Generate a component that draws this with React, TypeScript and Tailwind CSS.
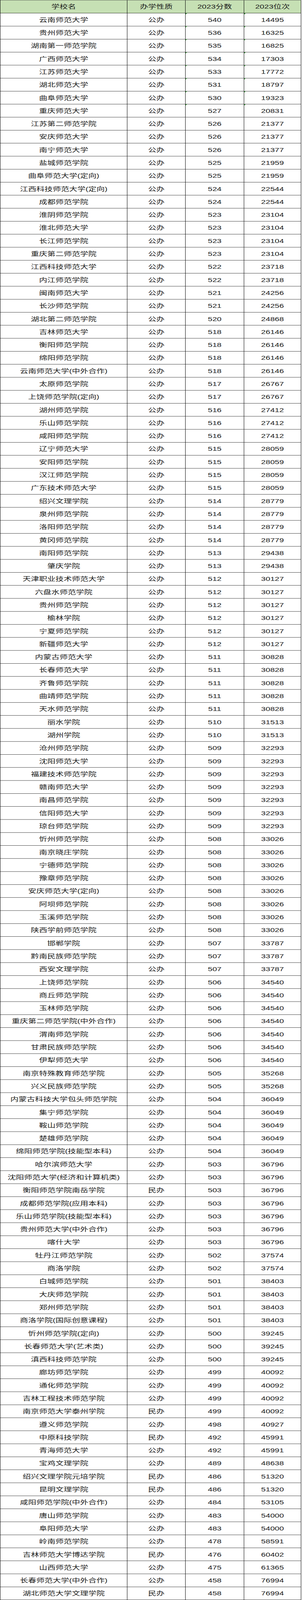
import { useEffect, useState } from "react";

const rows: [string, string, number, number][] = [
  ["云南师范大学", "公办", 540, 14495],
  ["贵州师范大学", "公办", 536, 16325],
  ["湖南第一师范学院", "公办", 535, 16825],
  ["广西师范大学", "公办", 534, 17303],
  ["江苏师范大学", "公办", 533, 17772],
  ["湖北师范大学", "公办", 531, 18797],
  ["曲阜师范大学", "公办", 530, 19323],
  ["重庆师范大学", "公办", 527, 20831],
  ["江苏第二师范学院", "公办", 526, 21377],
  ["安庆师范大学", "公办", 526, 21377],
  ["南宁师范大学", "公办", 526, 21377],
  ["盐城师范学院", "公办", 525, 21959],
  ["曲阜师范大学(定向)", "公办", 525, 21959],
  ["江西科技师范大学(定向)", "公办", 524, 22544],
  ["成都师范学院", "公办", 524, 22544],
  ["淮阴师范学院", "公办", 523, 23104],
  ["淮北师范大学", "公办", 523, 23104],
  ["长江师范学院", "公办", 523, 23104],
  ["重庆第二师范学院", "公办", 523, 23104],
  ["江西科技师范大学", "公办", 522, 23718],
  ["内江师范学院", "公办", 522, 23718],
  ["闽南师范大学", "公办", 521, 24256],
  ["长沙师范学院", "公办", 521, 24256],
  ["湖北第二师范学院", "公办", 520, 24868],
  ["吉林师范大学", "公办", 518, 26146],
  ["衡阳师范学院", "公办", 518, 26146],
  ["绵阳师范学院", "公办", 518, 26146],
  ["云南师范大学(中外合作)", "公办", 518, 26146],
  ["太原师范学院", "公办", 517, 26767],
  ["上饶师范学院(定向)", "公办", 517, 26767],
  ["湖州师范学院", "公办", 516, 27412],
  ["乐山师范学院", "公办", 516, 27412],
  ["咸阳师范学院", "公办", 516, 27412],
  ["辽宁师范大学", "公办", 515, 28059],
  ["安阳师范学院", "公办", 515, 28059],
  ["汉江师范学院", "公办", 515, 28059],
  ["广东技术师范大学", "公办", 515, 28059],
  ["绍兴文理学院", "公办", 514, 28779],
  ["泉州师范学院", "公办", 514, 28779],
  ["洛阳师范学院", "公办", 514, 28779],
  ["黄冈师范学院", "公办", 514, 28779],
  ["南阳师范学院", "公办", 513, 29438],
  ["肇庆学院", "公办", 513, 29438],
  ["天津职业技术师范大学", "公办", 512, 30127],
  ["六盘水师范学院", "公办", 512, 30127],
  ["贵州师范学院", "公办", 512, 30127],
  ["榆林学院", "公办", 512, 30127],
  ["宁夏师范学院", "公办", 512, 30127],
  ["新疆师范大学", "公办", 512, 30127],
  ["内蒙古师范大学", "公办", 511, 30828],
  ["长春师范大学", "公办", 511, 30828],
  ["齐鲁师范学院", "公办", 511, 30828],
  ["曲靖师范学院", "公办", 511, 30828],
  ["天水师范学院", "公办", 511, 30828],
  ["丽水学院", "公办", 510, 31513],
  ["湖州学院", "公办", 510, 31513],
  ["沧州师范学院", "公办", 509, 32293],
  ["沈阳师范大学", "公办", 509, 32293],
  ["福建技术师范学院", "公办", 509, 32293],
  ["赣南师范大学", "公办", 509, 32293],
  ["南昌师范学院", "公办", 509, 32293],
  ["信阳师范大学", "公办", 509, 32293],
  ["琼台师范学院", "公办", 509, 32293],
  ["忻州师范学院", "公办", 508, 33026],
  ["南京晓庄学院", "公办", 508, 33026],
  ["宁德师范学院", "公办", 508, 33026],
  ["豫章师范学院", "公办", 508, 33026],
  ["安庆师范大学(定向)", "公办", 508, 33026],
  ["阿坝师范学院", "公办", 508, 33026],
  ["玉溪师范学院", "公办", 508, 33026],
  ["陕西学前师范学院", "公办", 508, 33026],
  ["邯郸学院", "公办", 507, 33787],
  ["黔南民族师范学院", "公办", 507, 33787],
  ["西安文理学院", "公办", 507, 33787],
  ["上饶师范学院", "公办", 506, 34540],
  ["商丘师范学院", "公办", 506, 34540],
  ["玉林师范学院", "公办", 506, 34540],
  ["重庆第二师范学院(中外合作)", "公办", 506, 34540],
  ["渭南师范学院", "公办", 506, 34540],
  ["甘肃民族师范学院", "公办", 506, 34540],
  ["伊犁师范大学", "公办", 506, 34540],
  ["南京特殊教育师范学院", "公办", 505, 35268],
  ["兴义民族师范学院", "公办", 505, 35268],
  ["内蒙古科技大学包头师范学院", "公办", 504, 36049],
  ["集宁师范学院", "公办", 504, 36049],
  ["鞍山师范学院", "公办", 504, 36049],
  ["楚雄师范学院", "公办", 504, 36049],
  ["绵阳师范学院(技能型本科)", "公办", 504, 36049],
  ["哈尔滨师范大学", "公办", 503, 36796],
  ["沈阳师范大学(经济和计算机类)", "公办", 503, 36796],
  ["衡阳师范学院南岳学院", "民办", 503, 36796],
  ["成都师范学院(应用本科)", "公办", 503, 36796],
  ["乐山师范学院(技能型本科)", "公办", 503, 36796],
  ["贵州师范大学(中外合作)", "公办", 503, 36796],
  ["喀什大学", "公办", 503, 36796],
  ["牡丹江师范学院", "公办", 502, 37574],
  ["商洛学院", "公办", 502, 37574],
  ["白城师范学院", "公办", 501, 38403],
  ["大庆师范学院", "公办", 501, 38403],
  ["郑州师范学院", "公办", 501, 38403],
  ["商洛学院(国际创意课程)", "公办", 501, 38403],
  ["忻州师范学院(定向)", "公办", 500, 39245],
  ["长春师范大学(艺术类)", "公办", 500, 39245],
  ["滇西科技师范学院", "公办", 500, 39245],
  ["廊坊师范学院", "公办", 499, 40092],
  ["通化师范学院", "公办", 499, 40092],
  ["吉林工程技术师范学院", "公办", 499, 40092],
  ["南京师范大学泰州学院", "民办", 499, 40092],
  ["遵义师范学院", "公办", 498, 40927],
  ["中原科技学院", "民办", 492, 45991],
  ["青海师范大学", "公办", 492, 45991],
  ["宝鸡文理学院", "公办", 489, 48638],
  ["绍兴文理学院元培学院", "民办", 486, 51320],
  ["昆明文理学院", "民办", 486, 51320],
  ["咸阳师范学院(中外合作)", "公办", 484, 53105],
  ["唐山师范学院", "公办", 483, 54000],
  ["阜阳师范大学", "公办", 483, 54000],
  ["岭南师范学院", "公办", 478, 58591],
  ["吉林师范大学博达学院", "民办", 476, 60402],
  ["山西师范大学", "公办", 475, 61365],
  ["长春师范大学(中外合作)", "公办", 458, 76994],
  ["湖北师范大学文理学院", "民办", 458, 76994],
];

const FULL_HEIGHT = 5659;

// excel's "number stored as text" marker, only on the first rows
const Marker = () => (
  <span className="absolute left-0 top-0 h-0 w-0 border-t-[4px] border-r-[4px] border-t-[#1e8c1e] border-r-transparent" />
);

const cell = "flex h-[46px] items-center justify-center border-r border-b border-black";

// the sheet is drawn at 46px rows; if the window is shorter than the sheet,
// squeeze it vertically so the whole table still fits in the frame
const useFit = () => {
  const get = () => Math.min(1, window.innerHeight / FULL_HEIGHT);
  const [k, setK] = useState(get);
  useEffect(() => {
    const onResize = () => setK(get());
    window.addEventListener("resize", onResize);
    return () => window.removeEventListener("resize", onResize);
  }, []);
  return k;
};

export default function App() {
  const k = useFit();

  return (
    <div className="h-screen overflow-hidden bg-white">
      <div
        className="w-[771px] origin-top-left bg-white text-[21px] leading-none text-[#1a1a1a]"
        style={{
          fontFamily: '"Liberation Sans", "Noto Sans CJK SC", sans-serif',
          transform: `scaleY(${k})`,
        }}
      >
        <div className="grid grid-cols-[325px_149px_150px_146px] border-t border-l border-black">
          <div className={`${cell} bg-[#c6e0b4]`}>学校名</div>
          <div className={`${cell} bg-[#c6e0b4]`}>办学性质</div>
          <div className={`${cell} bg-[#c6e0b4]`}>2023分数</div>
          <div className={`${cell} bg-[#c6e0b4]`}>2023位次</div>
          {rows.map(([name, kind, score, rank], i) => (
            <div key={i} className="contents">
              <div className={cell}>{name}</div>
              <div className={cell}>{kind}</div>
              <div className={`${cell} relative`}>
                {i < 8 && <Marker />}
                {score}
              </div>
              <div className={`${cell} relative`}>
                {i < 8 && <Marker />}
                {rank}
              </div>
            </div>
          ))}
        </div>
      </div>
    </div>
  );
}
